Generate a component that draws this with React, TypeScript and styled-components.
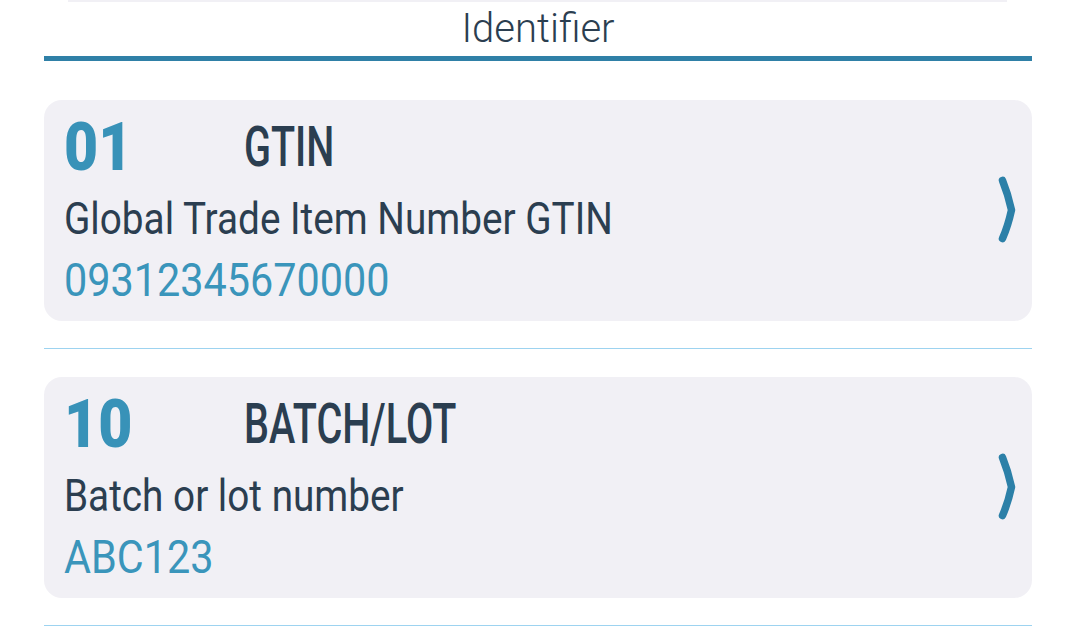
import React from 'react';
import styled, { createGlobalStyle } from 'styled-components';

const GlobalStyle = createGlobalStyle`
  html, body {
    margin: 0;
    padding: 0;
    background: #ffffff;
  }
  body {
    font-family: Roboto, "Liberation Sans", Arial, sans-serif;
    color: #2b3e50;
    -webkit-font-smoothing: antialiased;
  }
`;

const Page = styled.div`
  padding: 0 46px 0 44px;
`;

const TopEdge = styled.div`
  height: 2px;
  margin: 0 25px 0 24px;
  background: #f1f0f5;
`;

const Heading = styled.h2`
  margin: 3px 0 0;
  font-size: 40px;
  font-weight: 300;
  line-height: 48px;
  text-align: center;
  color: #2b3e50;
`;

const Rule = styled.div`
  margin-top: 3px;
  height: 5px;
  background: #2f80a7;
`;

const List = styled.div`
  margin-top: 39px;
  display: flex;
  flex-direction: column;
`;

const Card = styled.div`
  display: flex;
  align-items: center;
  box-sizing: border-box;
  height: 221px;
  padding: 14px 13px 15px 20px;
  background: #f1f0f5;
  border-radius: 18px;
`;

const Body = styled.div`
  flex: 1;
  display: flex;
  flex-direction: column;
  min-width: 0;
`;

const TopRow = styled.div`
  display: flex;
  height: 67px;
`;

const Code = styled.div`
  width: 180px;
  flex-shrink: 0;
  font-size: 67px;
  font-weight: 900;
  line-height: 67px;
  color: #3892b8;
  transform: scaleX(0.88);
  transform-origin: left center;
`;

const Title = styled.div`
  font-size: 55px;
  font-weight: 500;
  line-height: 67px;
  white-space: nowrap;
  color: #2b3e50;
  transform: scaleX(0.72);
  transform-origin: left center;
`;

const Description = styled.div`
  margin-top: 12px;
  font-size: 44px;
  font-weight: 400;
  line-height: 52px;
  white-space: nowrap;
  color: #2b3e50;
  transform: scaleX(0.88);
  transform-origin: left center;
`;

const Value = styled.div`
  margin-top: 9px;
  font-size: 47px;
  font-weight: 400;
  line-height: 52px;
  white-space: nowrap;
  color: #3a95bb;
  transform: scaleX(0.88);
  transform-origin: left center;
`;

const Chevron = styled.svg`
  flex-shrink: 0;
  width: 24px;
  height: 72px;
`;

const Divider = styled.div`
  height: 1px;
  margin: 27px 0 28px;
  background: #9dd3f0;
`;

type Entry = {
  code: string;
  title: string;
  description: string;
  value: string;
};

const entries: Entry[] = [
  {
    code: '01',
    title: 'GTIN',
    description: 'Global Trade Item Number GTIN',
    value: '09312345670000',
  },
  {
    code: '10',
    title: 'BATCH/LOT',
    description: 'Batch or lot number',
    value: 'ABC123',
  },
];

function EntryCard({ entry }: { entry: Entry }) {
  return (
    <Card>
      <Body>
        <TopRow>
          <Code>{entry.code}</Code>
          <Title>{entry.title}</Title>
        </TopRow>
        <Description>{entry.description}</Description>
        <Value>{entry.value}</Value>
      </Body>
      <Chevron viewBox="0 0 24 72" fill="none">
        <path
          d="M7.5 6.5 Q13 20 16.5 36 Q13 52 7.5 64.5"
          stroke="#2c80a8"
          strokeWidth={7.5}
          strokeLinecap="round"
          strokeLinejoin="round"
        />
      </Chevron>
    </Card>
  );
}

export default function App() {
  return (
    <>
      <GlobalStyle />
      <Page>
        <TopEdge />
        <Heading>Identifier</Heading>
        <Rule />
        <List>
          {entries.map((entry) => (
            <React.Fragment key={entry.code}>
              <EntryCard entry={entry} />
              <Divider />
            </React.Fragment>
          ))}
        </List>
      </Page>
    </>
  );
}
